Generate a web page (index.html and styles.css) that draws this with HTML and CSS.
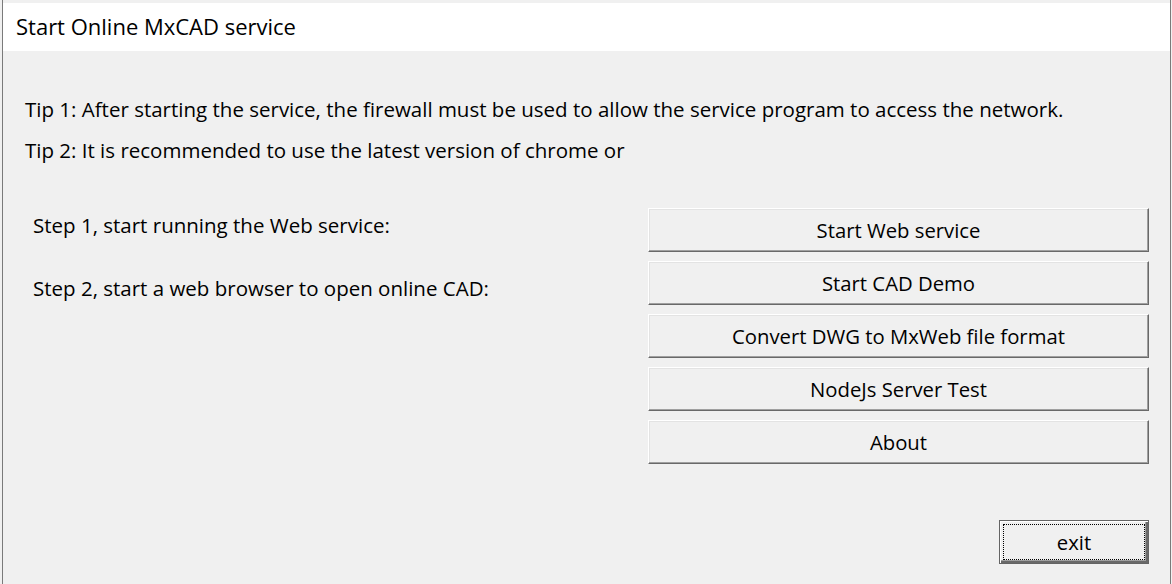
FILE: index.html
```html
<!DOCTYPE html>
<html lang="en">
<head>
<meta charset="utf-8">
<title>Start Online MxCAD service</title>
<link rel="stylesheet" href="styles.css">
</head>
<body>
<div class="window">
  <div class="titlebar">Start Online MxCAD service</div>
  <div class="content">
    <div class="tips">
      <p class="tip">Tip 1: After starting the service, the firewall must be used to allow the service program to access the network.</p>
      <p class="tip">Tip 2: It is recommended to use the latest version of chrome or</p>
    </div>
    <div class="main">
      <div class="steps">
        <p class="step">Step 1, start running the Web service:</p>
        <p class="step step-2">Step 2, start a web browser to open online CAD:</p>
      </div>
      <div class="actions">
        <button class="btn">Start Web service</button>
        <button class="btn">Start CAD Demo</button>
        <button class="btn">Convert DWG to MxWeb file format</button>
        <button class="btn">NodeJs Server Test</button>
        <button class="btn">About</button>
      </div>
    </div>
    <div class="footer">
      <button class="btn btn-default"><span class="focus">exit</span></button>
    </div>
  </div>
</div>
</body>
</html>
```
FILE: styles.css
```css
* { box-sizing: border-box; }
html, body {
  margin: 0;
  padding: 0;
  height: 100%;
  background: #f0f0f0;
  overflow: hidden;
}
body {
  font-family: "Open Sans", "Noto Sans", sans-serif;
  font-size: 20.5px;
  color: #000;
}
.window {
  margin-left: 2px;
  width: 1169px;
  height: 584px;
  border-left: 1px solid #7a7a7a;
  border-right: 1px solid #7a7a7a;
  display: flex;
  flex-direction: column;
}
.titlebar {
  margin-top: 3px;
  height: 48px;
  background: #fff;
  padding-left: 13px;
  line-height: 46px;
  font-size: 22px;
}
.content {
  flex: 1;
  display: flex;
  flex-direction: column;
  padding: 38px 21px 0 22px;
}
.tip, .step { margin: 0; }
.tip { line-height: 41px; }
.main {
  margin-top: 37px;
  display: flex;
  justify-content: space-between;
}
.steps { padding-left: 8px; }
.step { line-height: 34px; }
.steps .step-2 { margin-top: 29px; }
.actions {
  width: 501px;
  display: flex;
  flex-direction: column;
  gap: 9px;
}
.btn {
  font-family: inherit;
  font-size: 20.3px;
  color: #000;
  height: 44px;
  width: 100%;
  padding: 0;
  background: #f0f0f0;
  border: 1px solid;
  border-color: #fff #696969 #696969 #fff;
  box-shadow: inset -1px -1px 0 #a0a0a0, inset 1px 1px 0 #e3e3e3;
}
.footer {
  margin-top: 56px;
  display: flex;
  justify-content: flex-end;
}
.btn-default {
  width: 150px;
  padding: 3px;
  border: 1px solid #646464;
  box-shadow: inset 1px 1px 0 #fff, inset -2px -2px 0 #696969, inset -3px -3px 0 #a0a0a0;
  display: flex;
}
.focus {
  flex: 1;
  border: 1px dotted #000;
  display: flex;
  align-items: center;
  justify-content: center;
}
```
